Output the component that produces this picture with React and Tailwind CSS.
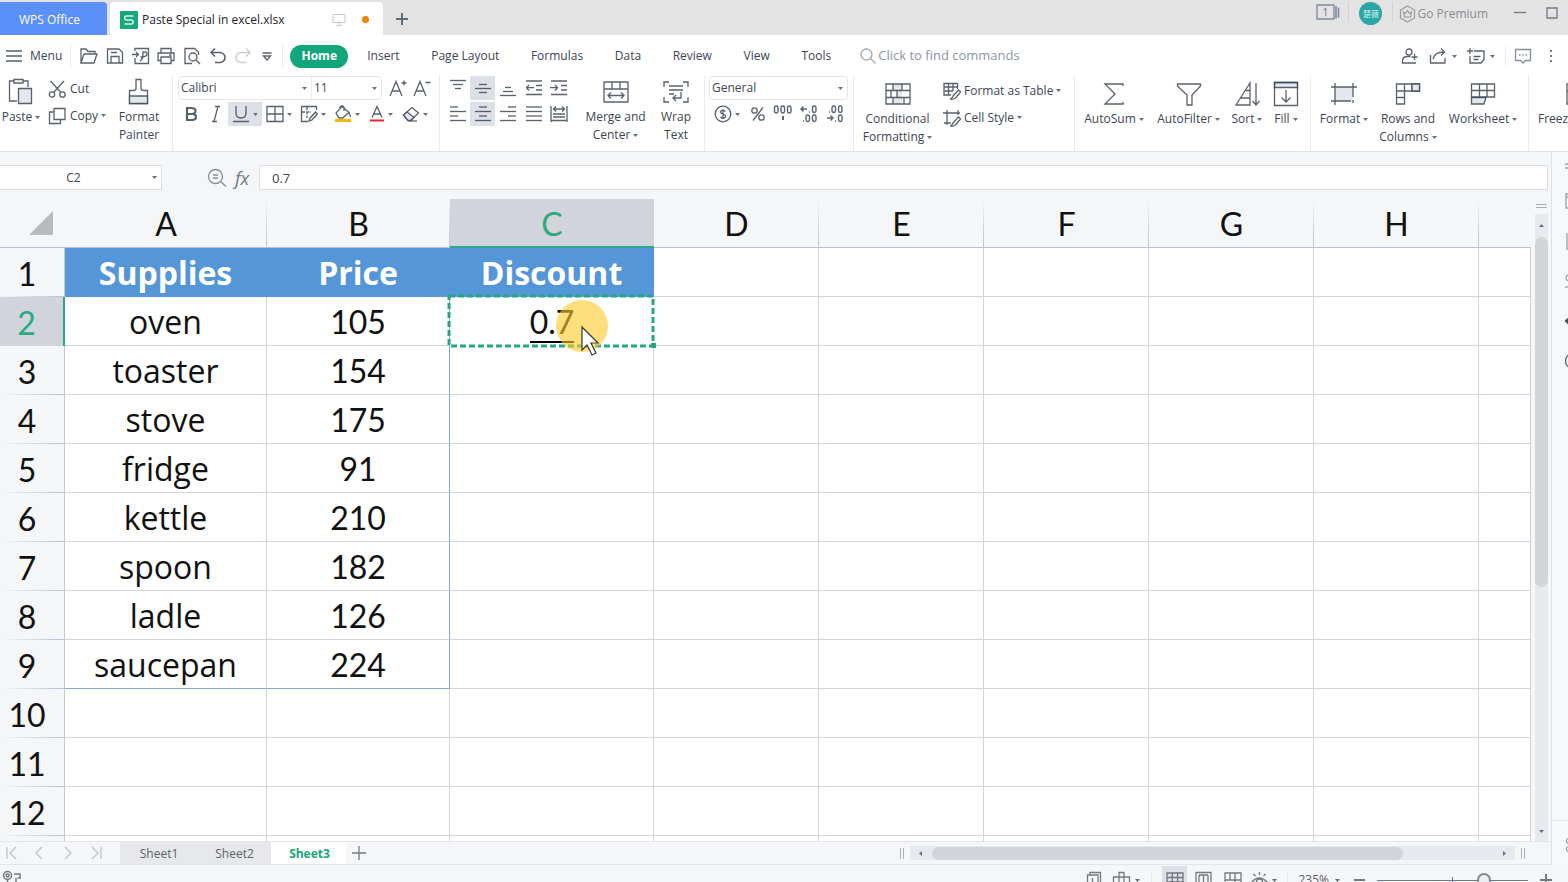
import React from "react";

const supplies = [
  ["oven", "105"],
  ["toaster", "154"],
  ["stove", "175"],
  ["fridge", "91"],
  ["kettle", "210"],
  ["spoon", "182"],
  ["ladle", "126"],
  ["saucepan", "224"],
];
const columns = ["A", "B", "C", "D", "E", "F", "G", "H"];
const menuTabs = ["Insert", "Page Layout", "Formulas", "Data", "Review", "View", "Tools"];

const Icon = ({ w = 20, h = w, sw = 1.3, className = "", children }) => (
  <svg
    width={w}
    height={h}
    viewBox={`0 0 ${w} ${h}`}
    fill="none"
    stroke="currentColor"
    strokeWidth={sw}
    strokeOpacity=".85"
    className={`shrink-0 ${className}`}
    aria-hidden="true"
  >
    {children}
  </svg>
);

const Caret = ({ className = "" }) => (
  <svg width="5" height="3" viewBox="0 0 5 3" className={`shrink-0 fill-[#667080] ${className}`} aria-hidden="true">
    <path d="M0 0h5L2.5 3z" />
  </svg>
);

const Divider = ({ className = "" }) => <div className={`w-px shrink-0 bg-[#e9ebee] ${className}`} />;

const IconButton = ({ label, caret, active, className = "", children }) => (
  <button
    aria-label={label}
    className={`flex h-6 shrink-0 items-center justify-center gap-[3px] ${active ? "bg-[#dde1e7]" : ""} ${className}`}
  >
    {children}
    {caret && <Caret />}
  </button>
);

const BigButton = ({ lines, caret, className = "", children }) => (
  <button className={`flex shrink-0 flex-col items-center ${className}`}>
    <span className="flex h-[33px] items-center">{children}</span>
    {lines.map((line, i) => (
      <span key={line} className="flex h-[18px] items-center gap-[3px] whitespace-nowrap">
        {line}
        {caret && i === lines.length - 1 && <Caret />}
      </span>
    ))}
  </button>
);

const SmallButton = ({ label, caret, children }) => (
  <button className="flex h-[27px] items-center gap-[3px] whitespace-nowrap">
    {children}
    {label}
    {caret && <Caret />}
  </button>
);

// horizontal strokes of an alignment icon, given as [x1, x2, y]
const Lines = ({ rows }) => (
  <Icon w={18}>
    {rows.map(([a, b, y]) => (
      <path key={y} d={`M${a} ${y}H${b}`} />
    ))}
  </Icon>
);

const TitleBar = () => (
  <header className="flex h-[35px] shrink-0 items-end bg-[#e3e3e4]">
    <button className="h-[33px] w-[107px] rounded-tr-sm bg-[#5b8ff9] pr-2 pt-0.5 text-[12px] text-white">WPS Office</button>
    <div className="ml-[3px] flex h-[33px] w-[273px] items-center rounded-t-sm bg-white pl-2.5 pr-3.5 pt-0.5 text-[12px] text-[#1f2329]">
      <svg width="18" height="18" viewBox="0 0 18 18" aria-hidden="true">
        <rect width="18" height="18" rx="1" fill="#14a77c" />
        <path d="M13.500 5H6.200Q4.700 5 4.700 6.900T6.200 9h5.300q1.600 0 1.600 2T11.500 13H4.500" fill="none" stroke="#d5f5e8" strokeWidth="1.500" />
      </svg>
      <span className="ml-1 whitespace-nowrap">Paste Special in excel.xlsx</span>
      <Icon w={14} sw={1} className="ml-auto text-[#b6bfcd]">
        <path d="M1 1.500h12v8H1zM7 9.500V12M4 12.500h6" />
      </Icon>
      <span className="ml-4 size-[7px] rounded-full bg-[#ee8208]" />
    </div>
    <button aria-label="New tab" className="flex h-[33px] w-[38px] items-center justify-center text-[#4b5563]">
      <Icon w={14} sw={2}>
        <path d="M7 1v12M1 7h12" />
      </Icon>
    </button>
    <div className="ml-auto flex h-[35px] items-start pr-2.5 text-[12px] text-[#8b8d91]">
      <button aria-label="Windows" className="mt-1 text-[#6e7a8e]">
        <Icon w={24} h={17}>
          <path d="M1 1h17v14H1z" />
          <path d="M20 2v12.500M22.500 3.500v10" strokeWidth="1.600" />
          <text x="9.500" y="12" textAnchor="middle" fontSize="11" fill="currentColor" stroke="none">1</text>
        </Icon>
      </button>
      <Divider className="ml-2 mt-0.5 h-5 !bg-[#d3d4d7]" />
      <span className="ml-2.5 mt-0.5 flex size-[23px] items-center justify-center rounded-full bg-[#2aa6a6] font-['Noto_Sans_CJK_SC',sans-serif] text-[8px] text-[#d6f3f0]">
        楚薇
      </span>
      <Divider className="ml-2.5 mt-0.5 h-5 !bg-[#d3d4d7]" />
      <button className="ml-1.5 mt-1 flex h-5 items-center gap-px whitespace-nowrap">
        <Icon w={17} h={18} sw={1.2}>
          <path d="M8.500 1l7 4v8l-7 4-7-4V5z" />
          <path d="M4.500 7l2 1.500 2-3 2 3 2-1.500-1 5h-6z" />
        </Icon>
        Go Premium
      </button>
      <button aria-label="Minimize" className="ml-[26px] mt-1.5 text-[#5c6779]">
        <Icon w={12}><path d="M0 6.500h12" /></Icon>
      </button>
      <button aria-label="Maximize" className="ml-5 mt-[7px] text-[#5c6779]">
        <Icon w={12}><path d="M1 1h10v10H1z" /></Icon>
      </button>
    </div>
  </header>
);

const MenuBar = () => (
  <nav className="flex h-10 shrink-0 items-center bg-white pt-0.5 text-[12px]">
    <button className="flex items-center gap-2 pl-1.5">
      <Icon w={16} h={14}><path d="M0 2h16M0 7h16M0 12h16" /></Icon>
      Menu
    </button>
    <Divider className="ml-2 h-6" />
    <div className="ml-[9px] flex w-[194px] items-center justify-between">
      <button aria-label="Open">
        <Icon w={18}><path d="M1 16V2h5l2 2.500h7V7M1 16l3-9h13l-3 9z" /></Icon>
      </button>
      <button aria-label="Save">
        <Icon w={18}><path d="M1.500 2H13l3.500 3.500V16h-15zM5 16V9.500h8V16M5 5.500h6" /></Icon>
      </button>
      <button aria-label="Export to PDF">
        <Icon w={18}><path d="M3 4V1.500h13.500v15H3V11M0 7.500h6M4 5l2.500 2.500L4 10M8 14c3-2 3-5 3-9h2q2 0 2 2t-4 3H8.500" /></Icon>
      </button>
      <button aria-label="Print">
        <Icon w={18}><path d="M4 6V1.500h10V6M4 13.500H1V6h16v7.500h-3M4 10h10v6.500H4zM12 8h2.500" /></Icon>
      </button>
      <button aria-label="Print preview">
        <Icon w={18}><path d="M15.500 8V5l-4-3.500H2v15h7" /><circle cx="10" cy="10" r="4" /><path d="M13 13l4 4" /></Icon>
      </button>
      <button aria-label="Undo">
        <Icon w={18} sw={1.6}><path d="M6 1.500L2 5.500l4 4M2 5.500h9a5 5 0 010 10H6" /></Icon>
      </button>
      <button aria-label="Redo" className="text-[#c3c7cd]">
        <Icon w={18} sw={1.6}><path d="M12 1.500l4 4-4 4M16 5.500H7a5 5 0 000 10h5" /></Icon>
      </button>
      <button aria-label="Customize toolbar">
        <Icon w={14}><path d="M2.500 4h9M3.500 7L7 11l3.500-4z" /></Icon>
      </button>
    </div>
    <Divider className="ml-2 h-6" />
    <button className="ml-[7px] h-[23px] w-[58px] rounded-full bg-[#12a67b] font-bold text-white">Home</button>
    <div className="ml-[19px] flex w-[464px] justify-between whitespace-nowrap">
      {menuTabs.map((tab) => (
        <button key={tab}>{tab}</button>
      ))}
    </div>
    <label className="ml-[29px] flex items-center gap-0.5 text-[#8b95a3]">
      <Icon w={16}><circle cx="6.500" cy="6.500" r="5.500" /><path d="M10.500 10.500l5 5" /></Icon>
      <input
        aria-label="Find commands"
        placeholder="Click to find commands"
        className="w-44 bg-transparent text-[13px] outline-none placeholder:text-[#8b95a3]"
      />
    </label>
    <div className="ml-auto flex items-center pr-3">
      <button aria-label="Invite">
        <Icon w={18}><circle cx="8" cy="5" r="3" /><path d="M11 16H1.500v-2q0-4 4-4.500h4M13.500 7v6M10.500 10h6M11 16h4" /></Icon>
      </button>
      <button aria-label="Share" className="ml-2.5 flex items-center gap-1">
        <Icon w={19} h={18}><path d="M1.500 8v8h14.500v-5M4 12c1-5 5-7 11-7M12 1.500L15.500 5 12 8.500" /></Icon>
        <Caret />
      </button>
      <button aria-label="Comments" className="ml-2.5 flex items-center gap-1">
        <Icon w={19} h={18}><path d="M7 4h10v8.500L14 16H3V9M6.500 9.500h7M6.500 12.500h5M3 1v6M0 4h6" /></Icon>
        <Caret />
      </button>
      <Divider className="ml-2.5 h-[22px]" />
      <button aria-label="Feedback" className="ml-2 text-[#6e7a8e]">
        <Icon w={18}><path d="M1.500 2.500h15v11h-5L9 16l-2.500-2.500h-5z" /><path d="M5 8h1.500M8.200 8h1.500M11.500 8h1.500" /></Icon>
      </button>
      <button aria-label="More" className="ml-3.5 text-[#5b6472]">
        <Icon w={10} h={16} sw={2}><path d="M5 2v2M5 7v2M5 12v2" /></Icon>
      </button>
    </div>
  </nav>
);

const Ribbon = () => (
  <section className="flex h-[77px] shrink-0 overflow-hidden border-b border-[#dfe1e5] bg-white text-[12px]">
    <div className="flex w-[172px] shrink-0 items-start">
      <BigButton lines={["Paste"]} caret className="w-[42px]">
        <Icon w={26} h={28}><path d="M9 23H1.500V3H6M15 3h5v6M6 1.500h9V5H6z" /><path d="M10.500 10.500h13v15h-13z" fill="#e4e7ec" /></Icon>
      </BigButton>
      <div className="ml-1.5 flex w-[62px] flex-col">
        <SmallButton label="Cut">
          <Icon w={19} h={18}><circle cx="4" cy="14.500" r="2.700" /><circle cx="14.500" cy="14.500" r="2.700" /><path d="M6 12L16 1M12.500 12L2.500 1" /></Icon>
        </SmallButton>
        <SmallButton label="Copy" caret>
          <Icon w={19} h={18}><path d="M6 1.500h11v11H6zM6 5H1.500v11.500h11v-4" /></Icon>
        </SmallButton>
      </div>
      <BigButton lines={["Format", "Painter"]} className="w-[58px]">
        <Icon w={22} h={28}><path d="M8 1.500h5v9q0 2 3 2h3.500v13h-18v-13H5q3 0 3-2z" /><path d="M1.500 18h18v7.500h-18z" fill="#e4e7ec" /></Icon>
      </BigButton>
    </div>
    <Divider className="h-[76px]" />

    <div className="flex w-[266px] shrink-0 flex-col gap-0.5 pl-[5px] pt-px">
      <div className="flex items-center">
        <div className="flex h-6 w-[204px] items-center rounded-sm border border-[#e3e5e9]">
          <label className="relative flex h-full w-[132px] items-center">
            <select aria-label="Font" className="w-full appearance-none bg-transparent pl-0.5 text-[12px] outline-none">
              <option>Calibri</option>
            </select>
            <Caret className="absolute right-1" />
          </label>
          <Divider className="h-full" />
          <label className="relative flex h-full flex-1 items-center">
            <select aria-label="Font size" className="w-full appearance-none bg-transparent pl-0.5 text-[12px] outline-none">
              <option>11</option>
            </select>
            <Caret className="absolute right-1" />
          </label>
        </div>
        <IconButton label="Increase font size" className="ml-1 w-6">
          <Icon w={18}><path d="M1 17L7 2.500 13 17M3 12h8M15 1.500v5M12.500 4h5" /></Icon>
        </IconButton>
        <IconButton label="Decrease font size" className="w-6">
          <Icon w={18}><path d="M1 17L7 2.500 13 17M3 12h8M12.500 3.500h5" /></Icon>
        </IconButton>
      </div>
      <div className="flex items-center">
        <IconButton label="Bold" className="w-[25px]">
          <Icon w={14} h={16} sw={2.2}><path d="M3 2h4.500q4 0 4 3t-4 3H3zM3 8h5q4 0 4 3t-4 3H3z" /></Icon>
        </IconButton>
        <IconButton label="Italic" className="w-[25px]">
          <Icon w={14} h={18}><path d="M6 1.500h5M3 16.500h5M9 1.500l-4 15" /></Icon>
        </IconButton>
        <IconButton label="Underline" caret active className="w-[34px]">
          <Icon w={18}><path d="M4 1v7q0 5 5 5t5-5V1M1 16.500h16" /></Icon>
        </IconButton>
        <IconButton label="Borders" caret className="w-[34px]">
          <Icon w={18}><path d="M1 1.500h16v15H1zM9 1.500v15M1 9h16" /></Icon>
        </IconButton>
        <IconButton label="Draw border" caret className="w-[34px]">
          <Icon w={18}><path d="M16.500 5V1.500h-15v15H8" /><path d="M2 7h9M7 2v11" strokeDasharray="3 1.200" /><path d="M9 16l1-3 5.500-6 2 2-5.500 6z" fill="#e4e7ec" /></Icon>
        </IconButton>
        <IconButton label="Fill color" caret className="w-[34px]">
          <Icon w={18}><path d="M8 1.500l7 6-6.500 5.500H5L2 8zM6 4V2q2-2 4 0v4M15 8q2 3 1 4" /><path d="M1 15.500h16" stroke="#f5b90a" strokeOpacity="1" strokeWidth="3" /></Icon>
        </IconButton>
        <IconButton label="Font color" caret className="w-[34px]">
          <Icon w={16} h={18}><path d="M3 12.500L8 1.500l5 11M5 9h6" /><path d="M1 15.500h14" stroke="#f5222d" strokeOpacity="1" strokeWidth="2" /></Icon>
        </IconButton>
        <IconButton label="Clear" caret className="w-[34px]">
          <Icon w={18}><path d="M1.500 10L10 2.500 16.500 8 8.500 15.500H6z" /><path d="M5 7l7 5.500-3.500 3H6L1.500 10z" fill="#e4e7ec" /><path d="M8 16h7" /></Icon>
        </IconButton>
      </div>
    </div>
    <Divider className="h-[76px]" />

    <div className="flex w-[264px] shrink-0 pl-[5px]">
      <div className="grid h-[51px] grid-cols-[25px_25px_26px_25px_26px] gap-y-0.5 pt-px">
        <IconButton label="Align top"><Lines rows={[[1, 17, 1.5], [4, 14, 5.5], [6, 12, 9.5]]} /></IconButton>
        <IconButton label="Align middle" active><Lines rows={[[5, 13, 5.5], [1, 17, 9.5], [5, 13, 13.5]]} /></IconButton>
        <IconButton label="Align bottom"><Lines rows={[[6, 12, 8.5], [4, 14, 12.5], [1, 17, 16.5]]} /></IconButton>
        <IconButton label="Decrease indent">
          <Icon w={18}><path d="M1 2h16M11 6.500h6M11 11h6M1 15.500h16M9 8.700H1.500M4 6L1.500 8.700 4 11.500" /></Icon>
        </IconButton>
        <IconButton label="Increase indent">
          <Icon w={18}><path d="M1 2h16M11 6.500h6M11 11h6M1 15.500h16M0 8.700h7.500M5 6l2.500 2.700L5 11.500" /></Icon>
        </IconButton>
        <IconButton label="Align left"><Lines rows={[[1, 9, 2], [1, 17, 6.5], [1, 9, 11], [1, 17, 15.5]]} /></IconButton>
        <IconButton label="Align center" active><Lines rows={[[5, 13, 2], [1, 17, 6.5], [5, 13, 11], [1, 17, 15.5]]} /></IconButton>
        <IconButton label="Align right"><Lines rows={[[9, 17, 2], [1, 17, 6.5], [9, 17, 11], [1, 17, 15.5]]} /></IconButton>
        <IconButton label="Justify"><Lines rows={[[1, 17, 2], [1, 17, 6.5], [1, 17, 11], [1, 17, 15.5]]} /></IconButton>
        <IconButton label="Distribute">
          <Icon w={18}><path d="M1 1v16M17 1v16M3 4h12M6 1.500L3.500 4 6 6.500M12 1.500L14.500 4 12 6.500M3 9h12M3 12h12M1 15.500h16" /></Icon>
        </IconButton>
      </div>
      <BigButton lines={["Merge and", "Center"]} caret className="ml-1.5 w-[75px]">
        <Icon w={26} h={24}><path d="M1 2h24v20H1zM1 9h24M9 2v7M17 2v7M5 15.500h16M8 12.500l-3 3 3 3M18 12.500l3 3-3 3" /></Icon>
      </BigButton>
      <BigButton lines={["Wrap", "Text"]} className="w-[46px]">
        <Icon w={26} h={24}><path d="M6 2H1v5M20 2h5v5M1 17v5h5M25 17v5h-5M6 6h14M6 10h14M6 14h5M18 12v6h-8M13 15l-3 3 3 3" /></Icon>
      </BigButton>
    </div>
    <Divider className="h-[76px]" />

    <div className="flex w-[148px] shrink-0 flex-col gap-0.5 pl-1 pt-px">
      <label className="relative flex h-6 w-[139px] items-center rounded-sm border border-[#e3e5e9]">
        <select aria-label="Number format" className="w-full appearance-none bg-transparent pl-0.5 text-[12px] outline-none">
          <option>General</option>
        </select>
        <Caret className="absolute right-1" />
      </label>
      <div className="flex items-center">
        <IconButton label="Currency" caret className="w-9">
          <Icon w={18}><circle cx="9" cy="9" r="7.800" /><path d="M11.500 6.500Q9 4.500 7 6t2 3 2 3.500T6.500 12M9 4v10" /></Icon>
        </IconButton>
        <IconButton label="Percent" className="w-[25px]">
          <Icon w={16}><circle cx="4.500" cy="4.500" r="2.700" /><circle cx="11.500" cy="11.500" r="2.700" /><path d="M13 1.500L3 14.500" /></Icon>
        </IconButton>
        <IconButton label="Thousands" className="w-[26px]">
          <Icon w={20} sw={1.4}><rect x="1.500" y="2" width="3.500" height="7" rx="1.700" /><rect x="8" y="2" width="3.500" height="7" rx="1.700" /><rect x="14.500" y="2" width="3.500" height="7" rx="1.700" /><path d="M10 12v4" strokeWidth="2" /></Icon>
        </IconButton>
        <IconButton label="Increase decimal" className="w-[26px]">
          <Icon w={20} sw={1.4}><path d="M2 5h6M4.500 2.500L2 5l2.500 2.500M10 8h1M4 17h1" /><rect x="13.500" y="2" width="3.500" height="6.500" rx="1.700" /><rect x="7" y="11" width="3.500" height="6.500" rx="1.700" /><rect x="13.500" y="11" width="3.500" height="6.500" rx="1.700" /></Icon>
        </IconButton>
        <IconButton label="Decrease decimal" className="w-[26px]">
          <Icon w={20} sw={1.4}><path d="M2 14h6M5.500 11.500L8 14l-2.500 2.500M4 8h1M10 17h1" /><rect x="7" y="2" width="3.500" height="6.500" rx="1.700" /><rect x="13.500" y="2" width="3.500" height="6.500" rx="1.700" /><rect x="13.500" y="11" width="3.500" height="6.500" rx="1.700" /></Icon>
        </IconButton>
      </div>
    </div>
    <Divider className="h-[76px]" />

    <div className="flex w-[220px] shrink-0 pl-1.5 pt-0.5">
      <BigButton lines={["Conditional", "Formatting"]} caret className="w-[75px]">
        <Icon w={26} h={24}><path d="M8 2h9v6.500H8zM12 8.500h5v7h-5zM8 15.500h9V22H8z" fill="#e4e7ec" stroke="none" /><path d="M1 2h24v20H1zM1 8.500h24M1 15.500h24M8 2v6.500M17 2v6.500M6 8.500v7M12 8.500v7M8 15.500V22M19 15.500V22" /></Icon>
      </BigButton>
      <div className="ml-2 flex flex-col">
        <SmallButton label="Format as Table" caret>
          <Icon w={18}><path d="M8 13H1V1.500h13.500V7M1 5h13.500M1 9h9M5.500 1.500V13M10 1.500V9" /><path d="M10 14l5.500-6 2 2-5 6q-3 2-5 1 2-1 2.500-3z" /></Icon>
        </SmallButton>
        <SmallButton label="Cell Style" caret>
          <Icon w={18}><path d="M4 1v15M0 4h17M15 1v5M1 14h7" /><path d="M10 14l5.500-6 2 2-5 6q-3 2-5 1 2-1 2.500-3z" /></Icon>
        </SmallButton>
      </div>
    </div>
    <Divider className="h-[76px]" />

    <div className="flex w-[235px] shrink-0 items-start pl-0.5 pt-0.5">
      <BigButton lines={["AutoSum"]} caret className="w-[74px]">
        <Icon w={22} h={24}><path d="M20 4V2H2l10 10L2 22h18v-2" /></Icon>
      </BigButton>
      <BigButton lines={["AutoFilter"]} caret className="w-[75px]">
        <Icon w={26} h={24}><path d="M1.500 2h23v2L16 13v10h-5V13L1.500 4z" /></Icon>
      </BigButton>
      <BigButton lines={["Sort"]} caret className="w-[42px]">
        <Icon w={26}><path d="M16 24H2L16 2zM11 9.500h5M6.500 17H16M22 2v22M18.500 20l3.500 4 3.500-4" /></Icon>
      </BigButton>
      <BigButton lines={["Fill"]} caret className="w-9">
        <Icon w={26}><path d="M1.500 1.500h23v5h-23z" fill="#e4e7ec" /><path d="M1.500 1.500h23v23h-23zM13 9v12M8.500 16.500L13 21l4.500-4.500" /></Icon>
      </BigButton>
    </div>
    <Divider className="h-[76px]" />

    <div className="flex w-[217px] shrink-0 items-start pl-[3px] pt-0.5">
      <BigButton lines={["Format"]} caret className="w-[60px]">
        <Icon w={26} h={24}><path d="M4 5h18v14H4z" fill="#e4e7ec" stroke="none" /><path d="M4 1v22M22 1v14M0 5h26M0 19h20M22 18v3" /></Icon>
      </BigButton>
      <BigButton lines={["Rows and", "Columns"]} caret className="w-[68px]">
        <Icon w={26} h={24}><path d="M1.500 2h23v7h-15v13h-8zM9.500 2v7M17 2v7M1.500 9h8M1.500 15.500h8" /><path d="M17 2h7.500v7H17z" fill="#e4e7ec" /></Icon>
      </BigButton>
      <BigButton lines={["Worksheet"]} caret className="w-[82px]">
        <Icon w={26} h={24}><path d="M1.500 2h23v13h-23zM9.500 2v13M17 2v13M1.500 8.500h23" /><path d="M1.500 15.500H16L14 22H1.500z" fill="#e4e7ec" /></Icon>
      </BigButton>
    </div>
    <Divider className="h-[76px]" />

    <div className="flex shrink-0 items-start pl-[9px] pt-0.5">
      <BigButton lines={["Freeze Panes"]} caret>
        <Icon w={26} h={24}><path d="M1 2h24v20H1zM1 9h24M9 2v20" /></Icon>
      </BigButton>
    </div>
  </section>
);

const FormulaBar = () => (
  <div className="flex h-[47px] shrink-0 items-center pr-[3px] pt-1">
    <label className="relative flex h-[25px] w-[162px] items-center border border-l-0 border-[#dcdfe4] bg-white">
      <input aria-label="Name box" defaultValue="C2" className="w-[147px] bg-transparent text-center text-[12px] outline-none" />
      <Caret className="absolute right-1" />
    </label>
    <button aria-label="Browse formula" className="ml-[45px] text-[#6e7a8e]">
      <Icon w={20}><circle cx="8.500" cy="8.500" r="7" /><path d="M14 14l5 4.500M6 7h5M6 10h5" /></Icon>
    </button>
    <button aria-label="Insert function" className="ml-2 w-6 text-left text-lg italic leading-6 text-[#6e7a8e]">
      fx
    </button>
    <input aria-label="Formula" defaultValue="0.7" className="h-[25px] min-w-0 flex-1 border border-[#dcdfe4] bg-white px-3 text-[13px] outline-none" />
  </div>
);

const RowHead = ({ n }) => (
  <th
    scope="row"
    className={`pr-2.5 pt-0.5 font-normal ${
      n === 2
        ? "border-r-2 border-[#2aa983] bg-[#d1d4da] text-[#2aa983]"
        : "border-r border-[#c3c9d4] bg-[#f5f6f8] bg-[linear-gradient(to_right,transparent,#b9c1ce)] bg-[length:100%_1px] bg-bottom bg-no-repeat text-[#111]"
    }`}
  >
    {n}
  </th>
);

const Cell = ({ children, className = "border-[#d0d4dc]" }) => (
  <td className={`border-b border-r pt-0.5 text-center ${className}`}>{children}</td>
);

// copy marquee, click highlight and mouse pointer over C2
const CopiedCell = ({ children }) => (
  <td className="relative text-center">
    <span className="border-b-2 border-black">{children}</span>
    <svg className="absolute -left-0.5 -top-0.5 h-[52px] w-[207px] overflow-visible" aria-hidden="true">
      <rect x="1" y="1" width="204" height="50" fill="none" stroke="#25a882" strokeWidth="3" strokeDasharray="6 3" />
      <path d="M203 48h5v5h-5z" fill="#25a882" />
      <circle cx="134" cy="31" r="26" fill="#fbc926" fillOpacity=".6" />
      <path d="M134 32v23l5-5 5 10 4-2-5-10h7z" fill="#fff" stroke="#3b3526" strokeWidth="1.200" />
    </svg>
  </td>
);

const Sheet = () => (
  <div className="min-w-0 flex-1 overflow-hidden bg-white">
    <table className="w-full table-fixed border-separate border-spacing-0 font-['Lato',sans-serif] text-[32px] leading-10 text-[#111]">
      <colgroup>
        <col className="w-[65px]" />
        <col className="w-[202px]" />
        <col className="w-[183px]" />
        <col className="w-[204px]" />
        {columns.slice(3).map((c) => (
          <col key={c} className="w-[165px]" />
        ))}
        <col />
      </colgroup>
      <thead>
        <tr className="h-[49px]">
          <th aria-label="Select all" className="border-b border-[#b9c1ce] bg-[#f5f6f8]">
            <svg width="24" height="24" viewBox="0 0 24 24" className="ml-auto mr-3" aria-hidden="true">
              <path d="M24 0v24H0z" fill="#b9babc" />
            </svg>
          </th>
          {columns.map((c) => (
            <th
              key={c}
              scope="col"
              className={`pt-0.5 font-normal ${
                c === "C"
                  ? "border-b-2 border-[#2aa983] bg-[#d1d4da] text-[#2aa983]"
                  : "border-b border-[#b9c1ce] bg-[#f5f6f8] bg-[linear-gradient(transparent,#b9c1ce)] bg-[length:1px_100%] bg-right bg-no-repeat"
              }`}
            >
              {c}
            </th>
          ))}
          <th className="border-b border-[#b9c1ce] bg-[#f5f6f8]" />
        </tr>
      </thead>
      <tbody>
        <tr className="h-[49px]">
          <RowHead n={1} />
          {["Supplies", "Price", "Discount"].map((h) => (
            <Cell key={h} className="border-[#5596d8] bg-[#5596d8] font-['Open_Sans',sans-serif] font-bold text-white">{h}</Cell>
          ))}
          {columns.slice(2).map((c) => (
            <Cell key={c} />
          ))}
        </tr>
        {supplies.map(([name, price], i) => {
          const last = i === supplies.length - 1;
          return (
            <tr key={name} className="h-[49px]">
              <RowHead n={i + 2} />
              <Cell className={`font-['Open_Sans',sans-serif] border-r-[#d0d4dc] ${last ? "border-b-[#7fa9d4]" : "border-b-[#d0d4dc]"}`}>
                {name}
              </Cell>
              <Cell className={last ? "border-[#7fa9d4]" : "border-b-[#d0d4dc] border-r-[#7fa9d4]"}>{price}</Cell>
              {i === 0 ? <CopiedCell>0.7</CopiedCell> : <Cell />}
              {columns.slice(2).map((c) => (
                <Cell key={c} />
              ))}
            </tr>
          );
        })}
        {[10, 11, 12, ""].map((n) => (
          <tr key={n} className="h-[49px]">
            <RowHead n={n} />
            {[...columns, "I"].map((c) => (
              <Cell key={c} />
            ))}
          </tr>
        ))}
      </tbody>
    </table>
  </div>
);

const VerticalScroll = () => (
  <div className="flex w-5 shrink-0 flex-col items-center pt-[5px]">
    <div className="mb-1.5 h-1 w-[11px] border-y border-[#a9b0bb]" />
    <div className="flex w-[13px] flex-1 flex-col items-center bg-[#e6e9ee]">
      <Caret className="my-2.5 rotate-180" />
      <div className="h-[350px] w-[13px] rounded-full bg-[#d1d4d9]" />
      <Caret className="mb-2 mt-auto" />
    </div>
  </div>
);

const SheetTabs = () => (
  <div className="flex h-6 shrink-0 items-center border-y border-[#e3e5e9] text-[12px]">
    <div className="flex w-[120px] shrink-0 items-center gap-4 pl-1.5 text-[#b4b8be]">
      <button aria-label="First sheet"><Icon w={12} h={14}><path d="M1 1v12M10 1L4 7l6 6" /></Icon></button>
      <button aria-label="Previous sheet"><Icon w={12} h={14}><path d="M8 1L2 7l6 6" /></Icon></button>
      <button aria-label="Next sheet"><Icon w={12} h={14}><path d="M3 1l6 6-6 6" /></Icon></button>
      <button aria-label="Last sheet"><Icon w={12} h={14}><path d="M11 1v12M2 1l6 6-6 6" /></Icon></button>
    </div>
    <button className="h-full w-[76px] bg-[#e6e8ec] pl-0.5 pt-0.5 text-[#5f6368]">Sheet1</button>
    <button className="h-full w-[75px] bg-[#e6e8ec] pl-0.5 pt-0.5 text-[#5f6368]">Sheet2</button>
    <button className="h-full w-[75px] bg-white pl-0.5 pt-0.5 font-bold text-[#17a57c]">Sheet3</button>
    <button aria-label="Add sheet" className="ml-1.5 text-[#5f6368]">
      <Icon w={14}><path d="M7 0v14M0 7h14" /></Icon>
    </button>
    <div className="ml-auto flex w-[626px] items-center">
      <div className="mr-1.5 h-[11px] w-1 border-x border-[#a9b0bb]" />
      <div className="flex h-[14px] w-[605px] items-center bg-[#e6e9ee] px-2">
        <Caret className="rotate-90" />
        <div className="ml-[9px] h-[13px] w-[471px] rounded-full bg-[#d1d4d9]" />
        <Caret className="ml-auto -rotate-90" />
      </div>
      <div className="ml-1.5 h-[11px] w-1 border-x border-[#a9b0bb]" />
    </div>
    <div className="w-[25px]" />
  </div>
);

const StatusBar = () => (
  <footer className="h-[17px] shrink-0 overflow-hidden bg-[#f5f6f8] text-[12px]">
    <div className="flex h-[30px] items-center text-[#5f6368]">
      <Icon w={22} className="ml-0.5" sw={1.5}>
        <circle cx="5.500" cy="6.500" r="4" /><circle cx="5.500" cy="6.500" r="1.500" /><path d="M5.500 11v6M12 5h6v4h-2.500M14 9v8M18 9h1" />
      </Icon>
      <div className="ml-auto flex items-center">
        <button aria-label="Backup"><Icon w={16} h={18}><path d="M4 4V1.500h10.500v12H12M1.500 4H12v12H1.500zM6.500 7v4l3 2" /></Icon></button>
        <button aria-label="Move cells" className="ml-2.5 flex items-center gap-1">
          <Icon w={19} h={18}><path d="M7 1.500h5V6h5.500v6H12v4.500H7V12H1.500V6H7zM7 6v6M12 6v6M7 6h5M7 12h5" /></Icon>
          <Caret />
        </button>
        <Divider className="ml-[11px] h-4" />
        <button aria-label="Normal view" className="ml-2.5 flex h-7 w-[25px] items-center justify-center bg-[#dde1e7]">
          <Icon w={18}><path d="M1 2h16v14H1zM1 6.500h16M1 11h16M6.300 2v14M11.600 2v14" /></Icon>
        </button>
        <button aria-label="Page view" className="ml-2"><Icon w={17} h={18}><path d="M1 1.500h15v15H1zM4 4v12.500M13 4v12.500M4 4h9M8.500 4v12.500" /></Icon></button>
        <button aria-label="Page break view" className="ml-3"><Icon w={18}><path d="M17 9V2H1v14h9l1-3h6V2M1 9h16M6 2v7M11 2v11" /></Icon></button>
        <button aria-label="Reading mode" className="ml-2 flex items-center gap-[3px]">
          <Icon w={19} h={18}><path d="M1 12q8-10 17 0-9 8-17 0zM9.500 1v3M3.500 3l2 2M15.500 3l-2 2" /><circle cx="9.500" cy="11" r="3" /></Icon>
          <Caret />
        </button>
        <Divider className="ml-2.5 h-4" />
        <button className="ml-2.5 flex items-center gap-1.5">235%<Caret /></button>
        <button aria-label="Zoom out" className="ml-3.5"><Icon w={11} h={14} sw={2}><path d="M0 7h11" /></Icon></button>
        <label className="relative ml-3 flex items-center">
          <span className="absolute left-[75px] h-1.5 w-px bg-[#6e7a8e]" />
          <input
            type="range"
            aria-label="Zoom"
            defaultValue="73"
            className="relative h-px w-[151px] appearance-none bg-[#6e7a8e] [&::-webkit-slider-thumb]:size-3.5 [&::-webkit-slider-thumb]:appearance-none [&::-webkit-slider-thumb]:rounded-full [&::-webkit-slider-thumb]:border-2 [&::-webkit-slider-thumb]:border-[#85888e] [&::-webkit-slider-thumb]:bg-[#eceef0]"
          />
        </label>
        <button aria-label="Zoom in" className="ml-3 mr-4"><Icon w={12} h={14} sw={2}><path d="M0 7h12M6 1v12" /></Icon></button>
      </div>
    </div>
  </footer>
);

// task pane strip, mostly past the window's right edge
const SidePane = () => (
  <aside className="flex w-[17px] shrink-0 flex-col justify-between overflow-hidden border-l border-[#dfe1e5] bg-[#f7f8f9] text-[#8a909a]">
    <div className="ml-[13px] mt-2.5 flex flex-col gap-[22px]">
      <Icon w={16} h={8}><path d="M0 2h16M0 6h16" /></Icon>
      <Icon w={18}><path d="M1 2h14v14H1zM1 5h14" /></Icon>
      <Icon w={18}><path d="M2 1v16h13" /></Icon>
      <Icon w={18}><circle cx="4" cy="6" r="3" /><path d="M0 15h16" /></Icon>
      <Icon w={18} className="text-[#454d5a]"><path d="M0 9l5-4v8z" fill="currentColor" /></Icon>
      <Icon w={18} className="text-[#454d5a]"><circle cx="8" cy="9" r="7.500" /></Icon>
    </div>
    <div className="border-t border-[#e3e5e9] pb-3 pl-[13px] pt-4">
      <Icon w={16}><circle cx="4" cy="4" r="2.500" /><circle cx="4" cy="12" r="2.500" /></Icon>
    </div>
  </aside>
);

export default function App() {
  return (
    <div className="flex h-screen flex-col overflow-hidden bg-[#f5f6f8] font-['Open_Sans','Noto_Sans',sans-serif] text-[#3c4554]">
      <TitleBar />
      <MenuBar />
      <Ribbon />
      <main className="flex min-h-0 flex-1">
        <div className="flex min-w-0 flex-1 flex-col">
          <FormulaBar />
          <div className="flex min-h-0 flex-1">
            <Sheet />
            <VerticalScroll />
          </div>
          <SheetTabs />
        </div>
        <SidePane />
      </main>
      <StatusBar />
    </div>
  );
}
